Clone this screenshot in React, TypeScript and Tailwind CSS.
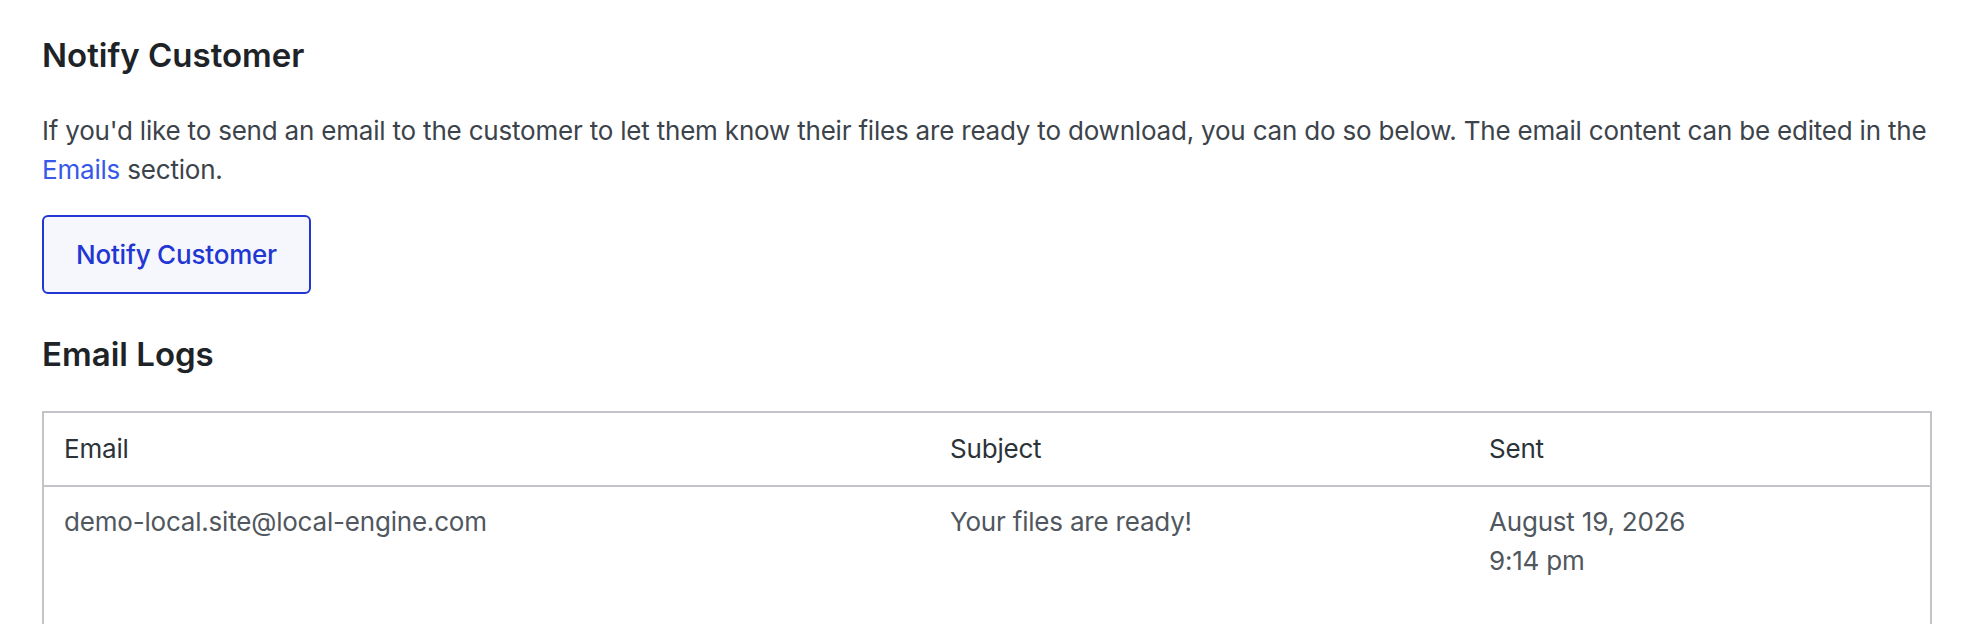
import React from "react";

const logs = [
  {
    email: "demo-local.site@local-engine.com",
    subject: "Your files are ready!",
    date: "August 19, 2026",
    time: "9:14 pm",
  },
];

export default function App() {
  return (
    <main
      className="min-h-[624px] bg-white pl-[42px] pr-[38px] pt-[33px] tracking-[-0.2px] text-[#3c434a]"
      style={{ fontFamily: "Inter, 'Noto Sans', sans-serif" }}
    >
      <h2 className="text-[33px] font-semibold leading-[44px] tracking-normal text-[#1d2327]">Notify Customer</h2>

      <p className="mt-[34px] text-[26px] leading-[39px]">
        If you'd like to send an email to the customer to let them know their files are ready to download, you can do
        so below. The email content can be edited in the{" "}
        <a href="#" className="text-[#3858e9]">
          Emails
        </a>{" "}
        section.
      </p>

      <button
        type="button"
        className="mt-[26px] h-[79px] rounded-[6px] border-2 border-[#2236d3] bg-[#f6f7fc] px-[32px] text-[26px] font-medium text-[#2236d3]"
      >
        Notify Customer
      </button>

      <h2 className="mt-[38px] text-[33px] font-semibold leading-[44px] tracking-normal text-[#1d2327]">Email Logs</h2>

      <div className="mt-[35px] border-2 border-[#c3c4c7]">
        <div className="grid grid-cols-[886px_539px_1fr] border-b-2 border-[#c3c4c7] text-[26px] leading-[39px] text-[#2c3338]">
          <div className="px-[20px] pt-[16px] pb-[17px]">Email</div>
          <div className="px-[20px] pt-[16px] pb-[17px]">Subject</div>
          <div className="px-[20px] pt-[16px] pb-[17px]">Sent</div>
        </div>
        {logs.map((log) => (
          <div
            key={log.email}
            className="grid grid-cols-[886px_539px_1fr] text-[26px] leading-[39px] text-[#50575e]"
          >
            <div className="px-[20px] pt-[15px] pb-[60px]">{log.email}</div>
            <div className="px-[20px] pt-[15px] pb-[60px]">{log.subject}</div>
            <div className="px-[20px] pt-[15px] pb-[60px]">
              {log.date}
              <br />
              {log.time}
            </div>
          </div>
        ))}
      </div>
    </main>
  );
}
